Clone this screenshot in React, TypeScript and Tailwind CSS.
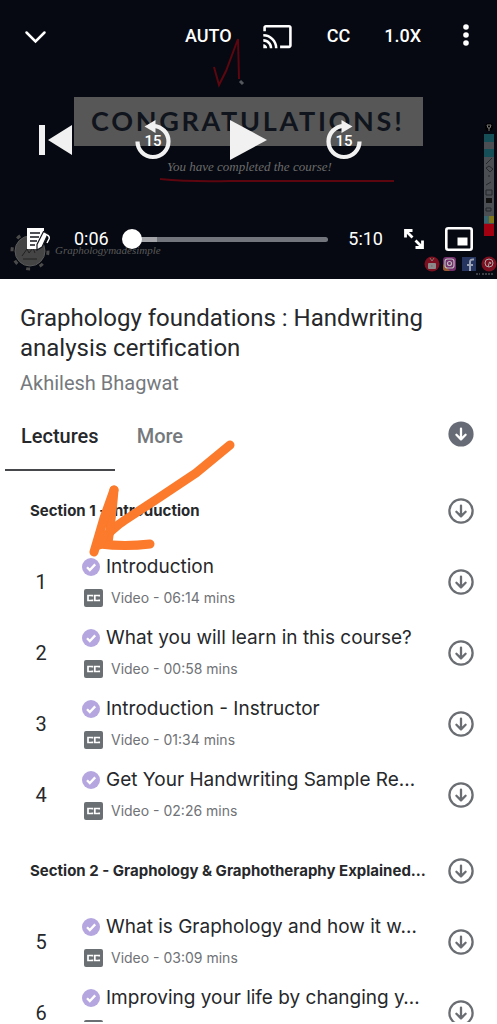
import { useState } from 'react';
import { MdCast } from 'react-icons/md';

type Lecture = { id: number; title: string; duration: string };
type CourseSection = { title: string; lectures: Lecture[] };

const SECTIONS: CourseSection[] = [
  {
    title: 'Section 1 - Introduction',
    lectures: [
      { id: 1, title: 'Introduction', duration: '06:14' },
      { id: 2, title: 'What you will learn in this course?', duration: '00:58' },
      { id: 3, title: 'Introduction - Instructor', duration: '01:34' },
      { id: 4, title: 'Get Your Handwriting Sample Re…', duration: '02:26' },
    ],
  },
  {
    title: 'Section 2 - Graphology & Graphotheraphy Explained…',
    lectures: [
      { id: 5, title: 'What is Graphology and how it w…', duration: '03:09' },
      { id: 6, title: 'Improving your life by changing y…', duration: '04:12' },
    ],
  },
];

const TABS = ['Lectures', 'More'] as const;

function DownloadIcon({ filled = false }: { filled?: boolean }) {
  return (
    <svg viewBox="0 0 26 26" className="size-[26px]" fill="none" strokeLinecap="round" strokeLinejoin="round">
      {filled ? (
        <circle cx="13" cy="13" r="12.6" fill="#666b75" />
      ) : (
        <circle cx="13" cy="13" r="11.6" stroke="#6a6d72" strokeWidth="2.3" />
      )}
      <path d="M13 7.6v10.6M8.4 13.8l4.6 4.6 4.6-4.6" stroke={filled ? '#fff' : '#6a6d72'} strokeWidth="2.3" />
    </svg>
  );
}

function CheckBadge() {
  return (
    <svg viewBox="0 0 18 18" className="size-[18px] shrink-0" role="img" aria-label="Completed">
      <circle cx="9" cy="9" r="9" fill="#b5a6e0" />
      <path d="M5 9.2l2.8 2.8L13.2 6.4" fill="none" stroke="#fff" strokeWidth="2.3" />
    </svg>
  );
}

function CaptionBadge() {
  return (
    <svg viewBox="0 0 19 18" className="h-[18px] w-[19px] shrink-0" role="img" aria-label="Captions available">
      <rect width="19" height="18" rx="2" fill="#6a6f73" />
      <path d="M8.4 7.6V6.5H4v5h4.4v-1.1M15.2 7.6V6.5h-4.4v5h4.4v-1.1" fill="none" stroke="#fff" strokeWidth="1.7" />
    </svg>
  );
}

function SeekIcon({ forward = false }: { forward?: boolean }) {
  return (
    <span className="relative block h-10 w-9">
      <svg viewBox="0 0 36 40" className={forward ? 'h-10 w-9 -scale-x-100' : 'h-10 w-9'}>
        <path d="M18 6a15.5 15.5 0 1 1-15.5 15.5" fill="none" stroke="#f1f1f1" strokeWidth="4.200" />
        <path d="M9.5 6.500l11-6.500v13z" fill="#f1f1f1" />
      </svg>
      <span className="absolute inset-x-0 top-3 text-center text-[15px] leading-[18px] font-medium">15</span>
    </span>
  );
}

// Still of the video that sits behind the player controls
function VideoFrame() {
  return (
    <svg viewBox="0 0 497 279" preserveAspectRatio="xMidYMid slice" className="absolute inset-0 size-full" aria-hidden="true">
      <rect width="497" height="279" fill="#060911" />
      <path d="M214 67l5 18 7-14 12-32 1 40" fill="none" stroke="#5c0610" strokeWidth="2" />
      <path d="M240 81l3 3" stroke="#55585c" strokeWidth="3" />
      <rect x="74" y="97" width="349" height="49" fill="#575757" />
      <text x="91" y="131" className="font-['Lato'] text-[27px] font-bold tracking-widest" fill="#10141c">
        CONGRATULATIONS!
      </text>
      <text x="167" y="171" className="font-['Liberation_Serif'] text-[13px] italic" fill="#6b6b6b">
        You have completed the course!
      </text>
      <path d="M160 179q30 3 70 2h164" fill="none" stroke="#5c0610" strokeWidth="2" />
      <circle cx="30" cy="251" r="18" fill="none" stroke="#4a4a4a" strokeWidth="3" strokeDasharray="4 10" />
      <circle cx="30" cy="251" r="15" fill="#454545" stroke="#5a5a5a" />
      <path d="M22 256l5-7 2 4 4-5 2 5M23 259h14" fill="none" stroke="#222" />
      <text x="55" y="254" className="font-['Liberation_Serif'] text-[11px] italic" fill="#5a5a5a">
        Graphologymadesimple
      </text>
      <circle cx="489" cy="127" r="4" fill="#000" />
      <path d="M487 125h4l-1 3h-2zM489 128v3" fill="none" stroke="#777" />
      <rect x="484" y="134" width="10" height="102" fill="#4b4e52" />
      <path d="M484 134h10v8h-10zM484 149h10v8h-10z" fill="#174f59" />
      <path d="M486 164l6-6M486 168l4 4 3-3-4-3zM488 176h2M486 185l5-3M486 190h6v5h-6zM486 208h5v3h-5z" fill="none" stroke="#25282d" />
      <path d="M486 198h6v5h-6z" fill="#111" />
      <path d="M484 216h5v7h-5z" fill="#376672" />
      <path d="M489 216h5v7h-5z" fill="#817519" />
      <path d="M484 224h10v12h-10z" fill="#a00010" />
      <circle cx="432" cy="264" r="7.5" fill="#7c1020" />
      <rect x="428" y="263" width="8" height="6" rx="1" fill="#8a8a8a" />
      <path d="M430 258l2 3 2-3M431 265v2l2-1z" fill="#711" stroke="#8a8a8a" strokeWidth=".8" />
      <rect x="443" y="257" width="13" height="14" rx="3" fill="#75306e" />
      <path d="M443 264l7 7h-4a3 3 0 0 1-3-3z" fill="#9a5930" />
      <rect x="445" y="259" width="9" height="9" rx="2.5" fill="none" stroke="#bbb" strokeWidth="1.2" />
      <circle cx="449.5" cy="263.5" r="2" fill="none" stroke="#bbb" strokeWidth="1.2" />
      <rect x="462" y="257" width="14" height="14" fill="#26355f" />
      <path d="M470 271v-9q0-3 4-2.5M467 265h6" fill="none" stroke="#9ba3b5" strokeWidth="2" />
      <circle cx="489" cy="264" r="7.5" fill="#7c1020" />
      <circle cx="489" cy="263" r="4" fill="none" stroke="#aaa" />
      <path d="M488 267l1.5-5q2 0 1 2" fill="none" stroke="#aaa" />
      <path d="M476 274h4M482 274h12" stroke="#3c3f45" strokeWidth="2" strokeDasharray="2 1" />
    </svg>
  );
}

function Player() {
  const [position, setPosition] = useState(6);

  return (
    <section className="relative shrink-0 bg-[#060911] pt-6 pb-7 text-white">
      <VideoFrame />

      {/* Top controls */}
      <div className="relative flex h-6 items-center pr-7 pl-6 text-lg font-medium">
        <button aria-label="Close player">
          <svg viewBox="0 0 24 24" className="size-6" fill="none" stroke="currentColor" strokeWidth="2.5" strokeLinecap="round">
            <path d="M2.5 8.5l9 9 9-9" />
          </svg>
        </button>
        <button className="ml-auto">AUTO</button>
        <button aria-label="Cast" className="ml-[30px]">
          <MdCast className="size-[31px]" />
        </button>
        <button className="ml-[34px]">CC</button>
        <button className="ml-[34px]">1.0X</button>
        <button aria-label="More options" className="ml-[42px]">
          <svg viewBox="0 0 6 24" className="h-6 w-1.5" fill="currentColor">
            <circle cx="3" cy="3" r="2.8" />
            <circle cx="3" cy="11" r="2.8" />
            <circle cx="3" cy="19" r="2.8" />
          </svg>
        </button>
      </div>

      {/* Playback controls */}
      <div className="relative mt-[72px] flex h-10 items-center justify-between px-[39px]">
        <button aria-label="Previous lecture" className="w-[37px]">
          <svg viewBox="0 0 33 32" className="h-8 w-[33px]" fill="#f1f1f1">
            <path d="M0 1h6v30H0zM33 1v30L9 16z" />
          </svg>
        </button>
        <button aria-label="Back 15 seconds">
          <SeekIcon />
        </button>
        <button aria-label="Play">
          <svg viewBox="0 0 37 40" className="h-10 w-[37px]" fill="#f1f1f1">
            <path d="M0 0l37 20L0 40z" />
          </svg>
        </button>
        <button aria-label="Forward 15 seconds">
          <SeekIcon forward />
        </button>
        <span className="w-[37px]" />
      </div>

      {/* Progress */}
      <div className="relative mt-[67px] flex h-6 items-center pr-6 pl-6 text-lg">
        <button aria-label="Notes">
          <svg viewBox="0 0 26 24" className="h-6 w-[26px]">
            <path d="M3 1h17v4l-7 17H3z" fill="#fff" />
            <path d="M6 6h10M6 10h9M6 14h7M6 18h5" stroke="#14171e" strokeWidth="1.6" />
            <path d="M19.5 4.5l4.5 2.500-6 13-5 3v-5.500z" fill="#fff" stroke="#14171e" strokeWidth="1.200" />
            <path d="M23 8q3 1 2 4l-2 4" fill="none" stroke="#fff" strokeWidth="1.5" />
          </svg>
        </button>
        <span className="ml-6">0:06</span>
        <input
          type="range"
          aria-label="Playback position"
          min={0}
          max={310}
          value={position}
          onChange={(e) => setPosition(Number(e.target.value))}
          className="ml-2.5 h-5 min-w-0 flex-1 appearance-none bg-transparent [&::-webkit-slider-runnable-track]:h-[5px] [&::-webkit-slider-runnable-track]:rounded-full [&::-webkit-slider-runnable-track]:bg-[linear-gradient(to_right,transparent_4%,#a3a5aa_4%,#a3a5aa_18%,#73757d_18%)] [&::-webkit-slider-thumb]:-mt-2 [&::-webkit-slider-thumb]:size-5 [&::-webkit-slider-thumb]:appearance-none [&::-webkit-slider-thumb]:rounded-full [&::-webkit-slider-thumb]:bg-white"
        />
        <span className="ml-5">5:10</span>
        <button aria-label="Full screen" className="ml-5">
          <svg viewBox="0 0 22 22" className="size-[22px]" fill="none" stroke="currentColor" strokeWidth="2.8">
            <path d="M9.5 2.5H2.5v7M2.5 2.5l7 7M12.5 19.5h7v-7M19.5 19.5l-7-7" />
          </svg>
        </button>
        <button aria-label="Picture in picture" className="ml-5">
          <svg viewBox="0 0 28 24" className="h-6 w-7">
            <rect x="1.3" y="1.3" width="25.4" height="21.4" rx="2" fill="none" stroke="#fff" strokeWidth="2.6" />
            <path d="M12.5 10.5h10v8h-10z" fill="#fff" />
          </svg>
        </button>
      </div>
    </section>
  );
}

function LectureRow({ lecture }: { lecture: Lecture }) {
  return (
    <li className="flex items-center py-[7px] pr-[23px]">
      <span className="w-[82px] shrink-0 text-center text-xl">{lecture.id}</span>
      <div className="min-w-0 flex-1">
        <div className="flex items-center gap-1.5">
          <CheckBadge />
          <h3 className="truncate font-['Inter'] text-[19px] leading-7">{lecture.title}</h3>
        </div>
        <div className="mt-[5px] flex items-center gap-2 pl-0.5">
          <CaptionBadge />
          <p className="font-['Inter'] text-sm leading-6 text-[#6f7276]">Video - {lecture.duration} mins</p>
        </div>
      </div>
      <button aria-label={`Download ${lecture.title}`} className="shrink-0">
        <DownloadIcon />
      </button>
    </li>
  );
}

// Hand-drawn pointer to the first completed lecture
function ArrowMark() {
  return (
    <svg
      viewBox="0 0 160 130"
      className="pointer-events-none absolute top-[156px] left-20 h-[130px] w-40"
      fill="none"
      stroke="#fb7a2b"
      strokeWidth="9"
      strokeLinecap="round"
      strokeLinejoin="round"
      aria-hidden="true"
    >
      <path d="M150 10L116 38L77 64L45 85Q31 94 20 109" />
      <path d="M34 55Q32 80 28 108" />
      <path d="M34 55L24 83L14 117" />
      <path d="M20 109Q45 112 70 109" />
      <path d="M24 100l-5 10" />
    </svg>
  );
}

export default function App() {
  const [activeTab, setActiveTab] = useState<(typeof TABS)[number]>('Lectures');

  return (
    <div className="flex h-screen flex-col overflow-hidden border-b-2 border-white bg-white font-['Roboto',sans-serif] text-[#26282b]">
      <Player />

      <main className="relative shrink-0">
        <header className="px-5 pt-6">
          <h1 className="text-2xl leading-[30px]">Graphology foundations : Handwriting analysis certification</h1>
          <p className="mt-1.5 text-xl leading-7 text-[#75797d]">Akhilesh Bhagwat</p>
        </header>

        <div className="flex items-center pr-[23px] pl-[5px]">
          <div role="tablist" className="flex">
            {TABS.map((tab) => (
              <button
                key={tab}
                role="tab"
                aria-selected={activeTab === tab}
                onClick={() => setActiveTab(tab)}
                className={`border-b-2 pt-[25px] pb-[19px] text-xl leading-7 font-medium ${
                  activeTab === tab ? 'border-[#45474b] px-4' : 'border-transparent px-[22px] text-[#75797d]'
                }`}
              >
                {tab}
              </button>
            ))}
          </div>
          <button aria-label="Download all" className="ml-auto">
            <DownloadIcon filled />
          </button>
        </div>

        {SECTIONS.map((section) => (
          <section key={section.title} className="pt-[5px] pb-px">
            <div className="flex h-[70px] items-center pr-[23px] pl-[30px]">
              <h2 className="min-w-0 flex-1 truncate font-['Inter'] text-[15px] font-bold">{section.title}</h2>
              <button aria-label={`Download ${section.title}`} className="shrink-0">
                <DownloadIcon />
              </button>
            </div>
            <ul>
              {section.lectures.map((lecture) => (
                <LectureRow key={lecture.id} lecture={lecture} />
              ))}
            </ul>
          </section>
        ))}

        <ArrowMark />
      </main>
    </div>
  );
}
